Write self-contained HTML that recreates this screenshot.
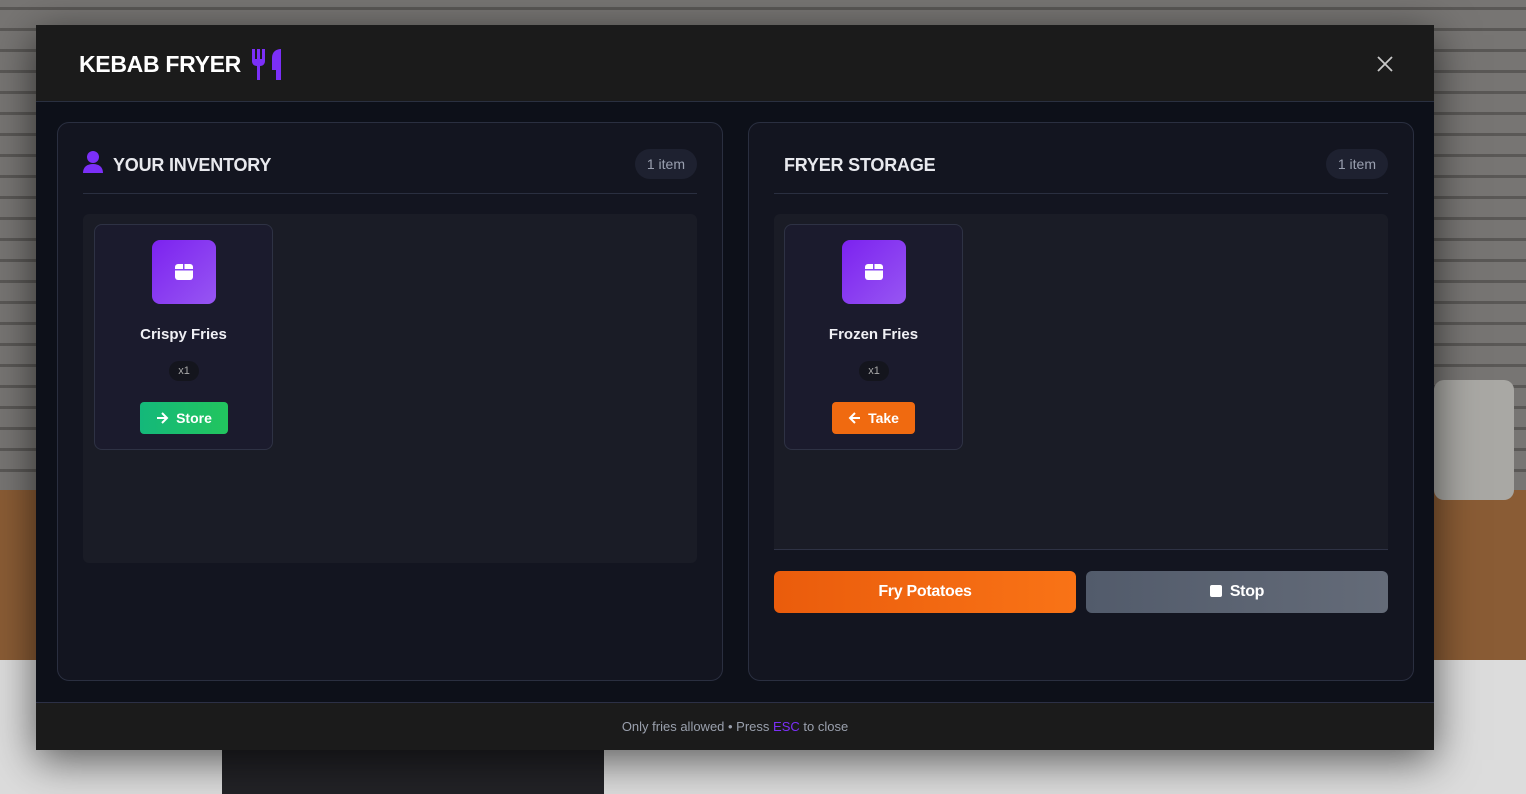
<!DOCTYPE html>
<html><head><style>
*{box-sizing:border-box;margin:0;padding:0}
body{width:1526px;height:794px;overflow:hidden;position:relative;font-family:"Liberation Sans",sans-serif;background:#6b6a68}
.bg{position:absolute}
.modal{position:absolute;left:36px;top:25px;width:1398px;height:725px;background:#0d1019;box-shadow:0 10px 40px rgba(0,0,0,.6)}
.hdr{position:absolute;left:0;top:0;width:100%;height:77px;background:#1b1b1b;border-bottom:1px solid #2a3040}
.title{position:absolute;left:43px;top:22px;height:34px;display:flex;align-items:center;color:#fff;font-size:23px;font-weight:bold;letter-spacing:-0.3px}
.ftr{position:absolute;left:0;top:677px;width:100%;height:48px;background:#1b1b1b;border-top:1px solid #2c3046;color:#9aa0ad;font-size:13px;text-align:center;line-height:48px}
.panel{position:absolute;top:97px;height:559px;background:#131520;border:1px solid #2a2f40;border-radius:12px}
.ph{position:absolute;left:25px;right:25px;top:0;height:71px;border-bottom:1px solid #2a2f40}
.pt{position:absolute;top:32px;color:#e8e9ee;font-size:18px;font-weight:bold;letter-spacing:-0.2px}
.badge{position:absolute;right:0;top:26px;height:30px;padding:0 12px;border-radius:15px;background:#1e2130;color:#9aa0b0;font-size:14px;line-height:30px}
.grid{position:absolute;left:25px;right:25px;top:91px;background:#1a1c26;border-radius:6px}
.card{position:absolute;left:10px;top:10px;width:179px;height:226px;background:#1b1b2d;border:1px solid #2e3244;border-radius:8px;text-align:center}
.ico{position:absolute;left:57px;top:15px;width:64px;height:64px;border-radius:8px;background:linear-gradient(135deg,#7c22f0,#9756f2)}
.name{position:absolute;left:0;right:0;top:101px;color:#f0f0f5;font-size:15px;font-weight:bold}
.qty{position:absolute;left:74px;top:136px;width:30px;height:20px;border-radius:10px;background:#14151d;color:#aaa;font-size:11px;line-height:20px}
.btn{position:absolute;top:177px;height:32px;border-radius:4px;color:#fff;font-weight:bold;font-size:14px;display:flex;align-items:center;justify-content:center;gap:7px}
.big{position:absolute;top:448px;width:302px;height:42px;border-radius:6px;color:#fff;font-weight:bold;font-size:16px;text-align:center;line-height:42px;letter-spacing:-0.3px}
</style></head><body>
<div class="bg" style="left:0;top:0;width:1526px;height:490px;background:repeating-linear-gradient(0deg,#777573 0 18px,#5a5856 18px 21px)"></div>
<div class="bg" style="left:0;top:490px;width:1526px;height:170px;background:#8a5c35"></div>
<div class="bg" style="left:0;top:660px;width:1526px;height:134px;background:#dcdcdc"></div>
<div class="bg" style="left:222px;top:740px;width:382px;height:54px;background:#222226"></div>
<div class="bg" style="left:1434px;top:380px;width:80px;height:120px;background:#a9a8a4;border-radius:10px"></div>
<div class="modal">
 <div class="hdr"><div class="title">KEBAB FRYER <svg width="30" height="31" viewBox="0 0 30 31" style="margin-left:11px"><path d="M0 0h3v10h2V0h3v10h2V0h3v12c0 3-2 5-5 5v14H5V17c-3 0-5-2-5-5z" fill="#7b2ff7"/><path d="M29 0v31h-5V21h-4V9c0-6 4-9 9-9z" fill="#7b2ff7"/></svg></div>
 <svg width="16" height="16" viewBox="0 0 16 16" style="position:absolute;right:41px;top:31px"><path d="M1 1L15 15M15 1L1 15" stroke="#c8c8c8" stroke-width="1.8"/></svg></div>
 <div class="panel" style="left:21px;width:666px">
  <div class="ph"><svg width="20" height="22" viewBox="0 0 20 22" style="position:absolute;left:0;top:28px"><circle cx="10" cy="6" r="6" fill="#7b2ff7"/><path d="M0 22c0-6 4-9 10-9s10 3 10 9z" fill="#7b2ff7"/></svg><div class="pt" style="left:30px">YOUR INVENTORY</div><div class="badge">1 item</div></div>
  <div class="grid" style="height:349px">
   <div class="card" style="left:11px"><div class="ico"><svg width="18" height="16" viewBox="0 0 18 16" style="margin-top:24px"><rect x="0" y="0" width="18" height="16" rx="3" fill="#fff"/><rect x="0" y="5" width="18" height="1.5" fill="#8a45f3"/><rect x="8" y="0" width="1.5" height="6" fill="#8a45f3"/></svg></div><div class="name">Crispy Fries</div><div class="qty">x1</div><div class="btn" style="left:45px;width:88px;background:linear-gradient(90deg,#14b87a,#22c55e)"><svg width="13" height="12" viewBox="0 0 13 12"><path d="M1 6h10M6 1l5 5-5 5" stroke="#fff" stroke-width="2" fill="none"/></svg>Store</div></div>
  </div>
 </div>
 <div class="panel" style="left:712px;width:666px">
  <div class="ph"><div class="pt" style="left:10px">FRYER STORAGE</div><div class="badge">1 item</div></div>
  <div class="grid" style="height:336px;border-bottom:1px solid #2e3244;border-radius:6px 6px 0 0">
   <div class="card"><div class="ico"><svg width="18" height="16" viewBox="0 0 18 16" style="margin-top:24px"><rect x="0" y="0" width="18" height="16" rx="3" fill="#fff"/><rect x="0" y="5" width="18" height="1.5" fill="#8a45f3"/><rect x="8" y="0" width="1.5" height="6" fill="#8a45f3"/></svg></div><div class="name">Frozen Fries</div><div class="qty">x1</div><div class="btn" style="left:47px;width:83px;background:#f06a10"><svg width="13" height="12" viewBox="0 0 13 12"><path d="M12 6H2M7 1L2 6l5 5" stroke="#fff" stroke-width="2" fill="none"/></svg>Take</div></div>
  </div>
  <div class="big" style="left:25px;background:linear-gradient(90deg,#ea5c0c,#f97316)">Fry Potatoes</div>
  <div class="big" style="left:337px;background:linear-gradient(90deg,#525b6b,#646b78)"><span style="display:inline-block;width:12px;height:12px;background:#fff;border-radius:2px;vertical-align:-1px;margin-right:8px"></span>Stop</div>
 </div>
 <div class="ftr">Only fries allowed • Press <b style="color:#7b2ff7;font-weight:normal">ESC</b> to close</div>
</div>
</body></html>
